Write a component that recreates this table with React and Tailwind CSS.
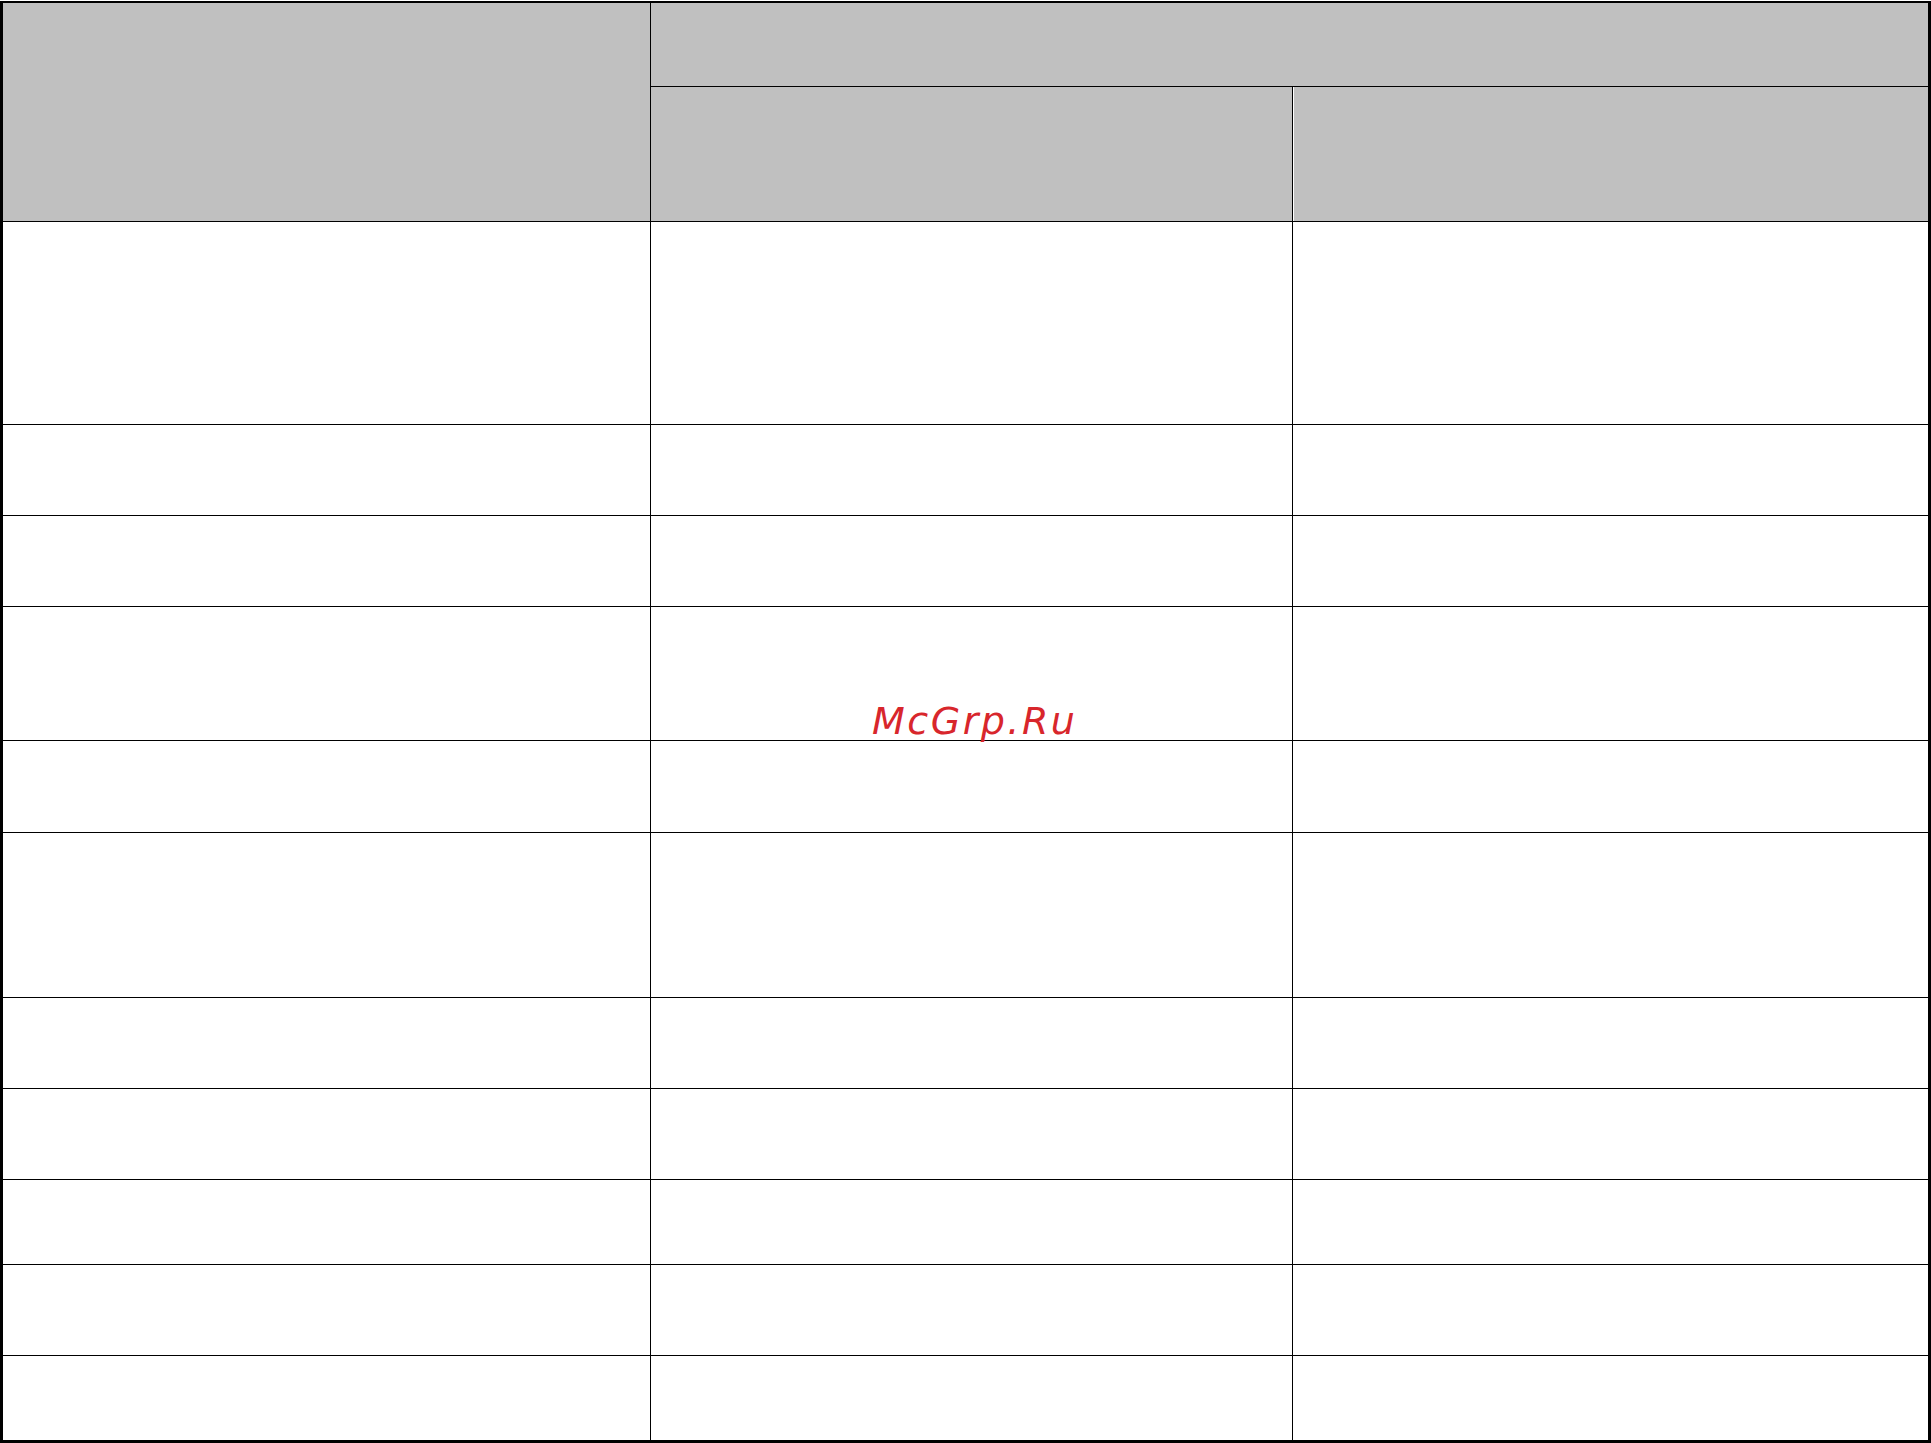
const rows = [202, 90, 90, 133, 91, 164, 90, 90, 84, 90, 84];

export default function App() {
  return (
    <div className="relative w-[1931px] h-[1443px] bg-white pt-px">
      <div className="w-[1931px] h-[1442px] border-t-2 border-x-[3px] border-b-[3px] border-black bg-black">
        <div className="grid grid-cols-[647px_641px_635px] grid-rows-[83px_134px_202px_90px_90px_133px_91px_164px_90px_90px_84px_90px_84px] gap-px">
          <div className="row-span-2 bg-[#c0c0c0]" />
          <div className="col-span-2 bg-[#c0c0c0]" />
          <div className="bg-[#c0c0c0]" />
          <div className="bg-[#c0c0c0] border-l border-white" />
          {rows.map((h, i) => (
            <div key={i} className="contents">
              <div className="bg-white" />
              <div className="bg-white" />
              <div className="bg-white" />
            </div>
          ))}
        </div>
      </div>
      <div
        className="absolute left-[872px] top-[702px] text-[38px] leading-none italic tracking-[2.5px] text-[#d8262c]"
        style={{ fontFamily: '"DejaVu Sans", sans-serif' }}
      >
        McGrp.Ru
      </div>
    </div>
  );
}
